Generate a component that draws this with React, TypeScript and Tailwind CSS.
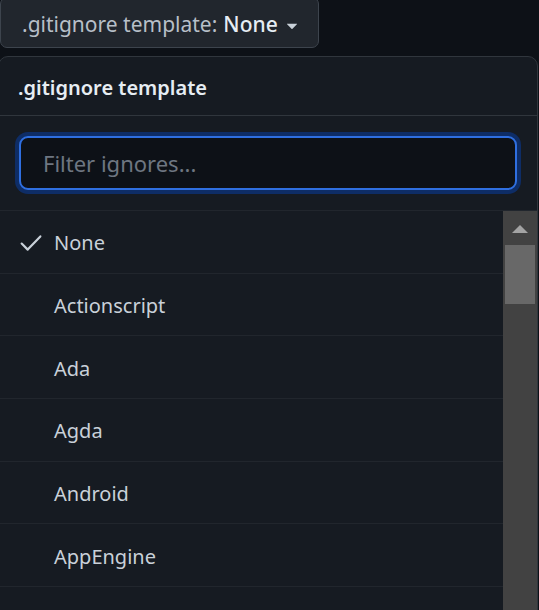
import { useState } from "react";

const templates = ["None", "Actionscript", "Ada", "Agda", "Android", "AppEngine"];

const Check = () => (
  <svg viewBox="0 0 20 16" width="22" height="18" fill="none" stroke="currentColor" strokeWidth="2" strokeLinecap="round" strokeLinejoin="round">
    <polyline points="1.5,8.5 7,14 18.5,2" />
  </svg>
);

const App = () => {
  const [selected, setSelected] = useState("None");
  const [filter, setFilter] = useState("");

  return (
    <div
      className="h-[610px] w-[539px] overflow-hidden bg-[#0d1117]"
      style={{ fontFamily: '"Noto Sans", "Open Sans", sans-serif' }}
    >
      {/* trigger button */}
      <button
        type="button"
        className="-mt-[3px] flex h-[51px] w-[319px] items-center rounded-[7px] border border-[#3d444d] bg-[#21262d] pl-[21px] pt-[4px] text-[21px] text-[#b7bfc8]"
      >
        .gitignore template:
        <span className="ml-[6px] font-medium text-[#e6edf3]">{selected}</span>
        <svg viewBox="0 0 16 16" width="22" height="22" fill="currentColor" className="ml-[3px] text-[#c9d1d9]">
          <path d="m4.427 7.427 3.396 3.396a.25.25 0 0 0 .354 0l3.396-3.396A.25.25 0 0 0 11.396 7H4.604a.25.25 0 0 0-.177.427Z" />
        </svg>
      </button>

      {/* dropdown panel */}
      <div className="-ml-[2px] mt-[8px] flex h-[600px] w-[540px] flex-col overflow-hidden rounded-[10px] border border-[#30363d] bg-[#161b22]">
        <div className="flex h-[59px] shrink-0 items-center border-b border-[#30363d] pl-[19px] pt-[3px] text-[20px] font-semibold text-[#e6edf3]">
          .gitignore template
        </div>

        <div className="flex h-[95px] shrink-0 items-center border-b border-[#21262d] px-[20px]">
          <input
            value={filter}
            onChange={(e) => setFilter(e.target.value)}
            placeholder="Filter ignores..."
            className="h-[54px] w-full rounded-[9px] border-2 border-[#2f6fe0] bg-[#0d1117] pl-[22px] text-[22px] text-[#e6edf3] shadow-[0_0_0_4px_#0e2d66] outline-none placeholder:text-[#6e7681]"
          />
        </div>

        <div className="flex min-h-0 flex-1">
          <ul className="flex-1">
            {templates
              .filter((t) => t.toLowerCase().includes(filter.toLowerCase()))
              .map((t) => (
                <li
                  key={t}
                  onClick={() => setSelected(t)}
                  className="flex h-[62.7px] cursor-pointer items-center border-b border-[#21262d] pt-[3px] text-[20px] text-[#c9d1d9]"
                >
                  <span className="flex w-[55px] justify-end pr-[12px] text-[#c9d1d9]">
                    {selected === t && <Check />}
                  </span>
                  {t}
                </li>
              ))}
          </ul>

          {/* scrollbar */}
          <div className="flex w-[34px] shrink-0 flex-col items-center bg-[#424242]">
            <div className="mt-[14px] h-0 w-0 border-x-[8px] border-b-[8px] border-x-transparent border-b-[#a3a3a3]" />
            <div className="mt-[12px] h-[59px] w-[30px] bg-[#686868]" />
          </div>
        </div>
      </div>
    </div>
  );
};

export default App;
